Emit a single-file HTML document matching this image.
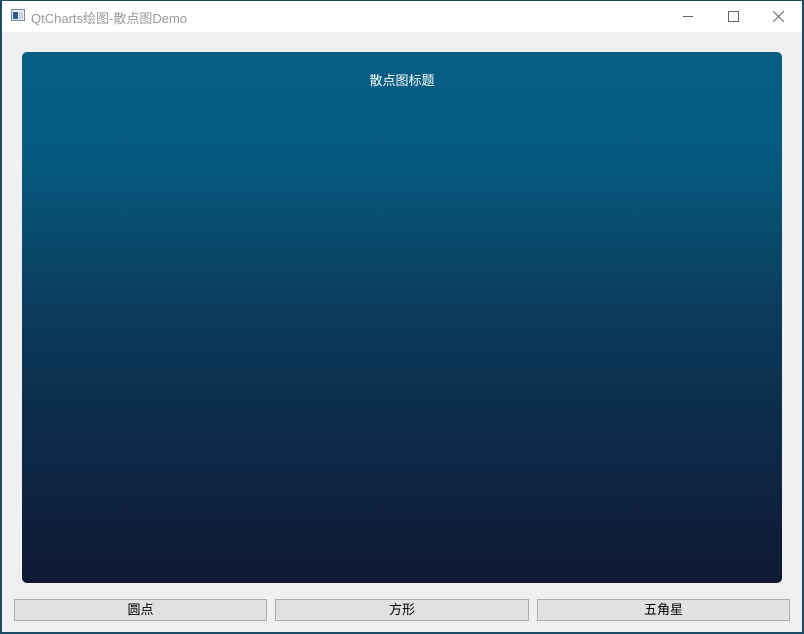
<!DOCTYPE html>
<html><head><meta charset="utf-8"><style>
body{margin:0;width:804px;height:634px;background:#1b4a63;position:relative;overflow:hidden;font-family:"Liberation Sans","Noto Sans CJK SC",sans-serif}
#win{position:absolute;left:2px;top:1px;width:800px;height:631px;background:#f0f0f0}
#title{position:absolute;left:0;top:0;width:800px;height:31px;background:#fff}
#title .t{position:absolute;left:29px;top:7px;font-size:13px;color:#999}
#chart{position:absolute;left:20px;top:51px;width:760px;height:531px;border-radius:5px;background:linear-gradient(#075f85 0%,#065a7f 20%,#0b3a5a 50%,#0e2140 85%,#0f1a32 100%)}
#chart .ct{position:absolute;top:18px;width:100%;text-align:center;color:#fff;font-size:13px}
.btn{position:absolute;top:598px;height:20px;background:#e1e1e1;border:1px solid #adadad;font-size:13px;text-align:center;line-height:20px;color:#000}
</style></head><body>
<div id="win">
<div id="title">
<svg style="position:absolute;left:9px;top:8px" width="14" height="12"><rect x="0.5" y="0.5" width="13" height="11" fill="#e8edf2" stroke="#7a8a99"/><rect x="2" y="3" width="5" height="7" fill="#2f5b86"/><rect x="8" y="3" width="4" height="7" fill="#c8d3dd"/></svg>
<span class="t">QtCharts绘图-散点图Demo</span>
<div style="position:absolute;left:681px;top:15px;width:10px;height:1px;background:#666"></div>
<div style="position:absolute;left:726px;top:10px;width:9px;height:9px;border:1px solid #666"></div>
<svg style="position:absolute;left:771px;top:10px" width="11" height="11"><path d="M0 0L11 11M11 0L0 11" stroke="#666" stroke-width="1"/></svg>
</div>
<div id="chart"><div class="ct">散点图标题</div></div>
<div class="btn" style="left:12px;width:251px">圆点</div>
<div class="btn" style="left:273px;width:252px">方形</div>
<div class="btn" style="left:535px;width:251px">五角星</div>
</div>
</body></html>
